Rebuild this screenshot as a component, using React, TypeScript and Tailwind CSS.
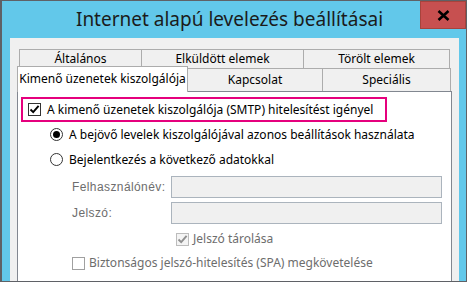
import React from 'react'

// Small Win8-style form controls
const CheckBox = ({ checked = false, disabled = false }: { checked?: boolean; disabled?: boolean }) => (
  <span
    className={`flex h-[13px] w-[13px] shrink-0 items-center justify-center border ${
      disabled ? 'border-[#bcbcbc] bg-[#f4f4f4]' : 'border-[#333333] bg-white'
    }`}
  >
    {checked && (
      <svg width="11" height="11" viewBox="0 0 11 11">
        <path
          d="M1.5 5.5 L4.2 8.2 L9.6 1.8"
          fill="none"
          stroke={disabled ? '#8f8f8f' : '#000'}
          strokeWidth="1.9"
        />
      </svg>
    )}
  </span>
)

const Radio = ({ checked = false }: { checked?: boolean }) => (
  <span className="flex h-[13px] w-[13px] shrink-0 items-center justify-center rounded-full border border-[#333333] bg-white">
    {checked && <span className="h-[7px] w-[7px] rounded-full bg-black" />}
  </span>
)

const font = "font-['Noto_Sans','Liberation_Sans',sans-serif]"

export default function App() {
  return (
    <div
      className={`flex h-[282px] w-[467px] flex-col overflow-hidden border-y border-l-2 border-r border-[#5f6166] bg-[#62c8ea] pl-2 pr-[7px] ${font}`}
    >
      {/* Title bar */}
      <div className="relative flex h-[37px] shrink-0 items-center justify-center">
        <span className="-ml-[10px] pb-[1px] text-[19px] text-[#1b1b1b]">Internet alapú levelezés beállításai</span>
        <div className="absolute -right-[7px] top-0 flex h-[28px] w-[46px] items-center justify-center border border-[#a7433c] bg-[#c75050]">
          <svg width="13" height="11" viewBox="0 0 13 11">
            <path d="M1.5 1 L11.5 10 M11.5 1 L1.5 10" stroke="#000" strokeWidth="2.6" />
          </svg>
        </div>
      </div>

      {/* Client area */}
      <div className="flex flex-1 flex-col bg-[#f0f0f0] pl-[7px] pt-[11px] text-[12px] text-black">
        {/* Back tab row */}
        <div className="ml-[2px] flex h-[19px]">
          <div className="flex w-[122px] items-center justify-center border-l border-t border-[#acacac] bg-[#f0f0f0]">Általános</div>
          <div className="flex w-[162px] items-center justify-center border-l border-t border-[#acacac] bg-[#f0f0f0]">Elküldött elemek</div>
          <div className="flex w-[147px] items-center justify-center border-x border-t border-[#acacac] bg-[#f0f0f0]">Törölt elemek</div>
        </div>

        {/* Front tab row */}
        <div className="-mt-[2px] flex h-[25px] items-end">
          <div className="relative z-10 -mb-px flex h-[26px] w-[171px] items-center justify-center border-x border-t border-[#acacac] bg-white pb-[2px]">
            Kimenő üzenetek kiszolgálója
          </div>
          <div className="flex h-[23px] w-[135px] items-center justify-center border-r border-t border-[#acacac] bg-[#f0f0f0]">Kapcsolat</div>
          <div className="flex h-[23px] w-[128px] items-center justify-center border-r border-t border-[#acacac] bg-[#f0f0f0]">Speciális</div>
        </div>

        {/* Tab page */}
        <div className="flex w-[435px] flex-1 flex-col border-x border-t border-[#828790] bg-white pt-[5px]">
          <div className="ml-[3px] flex h-[25px] w-[366px] items-center gap-[6px] border-2 border-[#e5007d] pl-[5px]">
            <CheckBox checked />
            <span>A kimenő üzenetek kiszolgálója (SMTP) hitelesítést igényel</span>
          </div>

          <div className="ml-[32px] flex h-[25px] items-center gap-[6px]">
            <Radio checked />
            <span>A bejövő levelek kiszolgálójával azonos beállítások használata</span>
          </div>
          <div className="ml-[32px] flex h-[25px] items-center gap-[6px]">
            <Radio />
            <span>Bejelentkezés a következő adatokkal</span>
          </div>

          <div className="mt-[4px] flex h-[22px] items-center">
            <span className="ml-[54px] w-[99px] font-['Liberation_Sans',sans-serif] tracking-[0.4px] text-[#6d6d6d]">Felhasználónév:</span>
            <div className="h-full w-[271px] border border-[#abb4bd] bg-[#f0f0f0]" />
          </div>
          <div className="mt-[4px] flex h-[22px] items-center">
            <span className="ml-[54px] w-[99px] font-['Liberation_Sans',sans-serif] tracking-[0.4px] text-[#6d6d6d]">Jelszó:</span>
            <div className="h-full w-[271px] border border-[#abb4bd] bg-[#f0f0f0]" />
          </div>

          <div className="ml-[158px] mt-[3px] flex h-[24px] items-center gap-[4px] text-[#6d6d6d]">
            <CheckBox checked disabled />
            <span>Jelszó tárolása</span>
          </div>
          <div className="ml-[54px] flex h-[24px] items-center gap-[4px] text-[#6d6d6d]">
            <span className="flex h-[13px] w-[13px] shrink-0 border border-[#a0a0a0] bg-white" />
            <span>Biztonságos jelszó-hitelesítés (SPA) megkövetelése</span>
          </div>
        </div>
      </div>
    </div>
  )
}
